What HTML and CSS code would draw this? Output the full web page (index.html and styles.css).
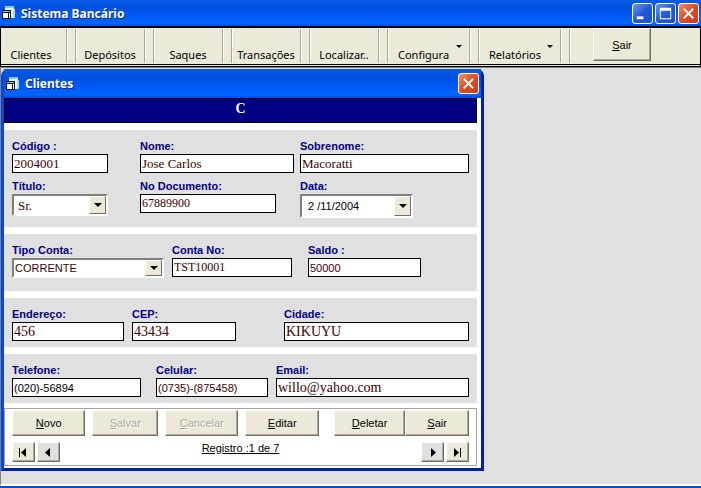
FILE: index.html
```html
<!DOCTYPE html>
<html lang="pt-BR">
<head>
    <meta charset="UTF-8">
    <meta name="viewport" content="width=device-width, initial-scale=1.0">
    <title>Sistema Bancário</title>
    <link rel="stylesheet" href="styles.css">
</head>
<body>
    <!-- Shared icon for the window title bars -->
    <svg class="sprite" aria-hidden="true">
        <symbol id="form-icon" viewBox="0 0 14 14">
            <path fill="#e8f4fc" d="M3 0h9v3h1v9H5V9H3z"/>
            <path fill="#6fd4e4" d="M3 0h9v2H3z"/>
            <path fill="#b4d4ec" d="M11 3h2v9h-2z"/>
            <path fill="#111" d="M0 4h9v9H0z"/>
            <path fill="#5fd0d8" d="M1 5h7v1H1z"/>
            <path fill="#fff" d="M1 7h5v5H1zM7 7h1v5H7z"/>
        </symbol>
    </svg>

    <div class="app">
        <header class="titlebar">
            <svg class="title-icon"><use href="#form-icon"/></svg>
            <h1>Sistema Bancário</h1>
            <div class="window-buttons">
                <button class="win-btn" aria-label="Minimizar">
                    <svg viewBox="0 0 20 20"><path fill="#fff" d="M4 13h7v3H4z"/></svg>
                </button>
                <button class="win-btn" aria-label="Maximizar">
                    <svg viewBox="0 0 20 20"><path fill="#fff" fill-rule="evenodd" d="M4 4h12v12H4zM5 7v8h10V7z"/></svg>
                </button>
                <button class="win-btn close" aria-label="Fechar">
                    <svg viewBox="0 0 20 20"><path stroke="#fff" stroke-width="2" d="M5 5l10 10M15 5L5 15"/></svg>
                </button>
            </div>
        </header>

        <nav class="toolbar">
            <button class="tool first">Clientes</button>
            <button class="tool">Depósitos</button>
            <button class="tool">Saques</button>
            <button class="tool">Transações</button>
            <button class="tool">Localizar..</button>
            <button class="tool wide">Configura <span class="arrow"></span></button>
            <button class="tool wide">Relatórios <span class="arrow"></span></button>
            <span class="separator"></span>
            <button class="button toolbar-exit"><u>S</u>air</button>
        </nav>

        <main class="workspace">
            <section class="child-window">
                <header class="titlebar child-title">
                    <svg class="title-icon"><use href="#form-icon"/></svg>
                    <h2>Clientes</h2>
                    <button class="win-btn close" aria-label="Fechar">
                        <svg viewBox="0 0 20 20"><path stroke="#fff" stroke-width="2" d="M5 5l10 10M15 5L5 15"/></svg>
                    </button>
                </header>

                <form class="client-form">
                    <h3 class="banner">C</h3>

                    <div class="panel personal">
                        <div class="field">
                            <label for="codigo">Código :</label>
                            <input class="small" type="text" id="codigo" value="2004001">
                        </div>
                        <div class="field">
                            <label for="nome">Nome:</label>
                            <input type="text" id="nome" value="Jose Carlos">
                        </div>
                        <div class="field">
                            <label for="sobrenome">Sobrenome:</label>
                            <input type="text" id="sobrenome" value="Macoratti">
                        </div>
                        <div class="field">
                            <label for="titulo">Título:</label>
                            <div class="combo small">
                                <select id="titulo"><option>Sr.</option></select>
                                <span class="drop"></span>
                            </div>
                        </div>
                        <div class="field">
                            <label for="documento">No Documento:</label>
                            <input class="large digits" type="text" id="documento" value="67889900">
                        </div>
                        <div class="field">
                            <label for="data">Data:</label>
                            <div class="combo medium date">
                                <select id="data"><option>2 /11/2004</option></select>
                                <span class="drop"></span>
                            </div>
                        </div>
                    </div>

                    <div class="panel account">
                        <div class="field">
                            <label for="tipo">Tipo Conta:</label>
                            <div class="combo type">
                                <select id="tipo"><option>CORRENTE</option></select>
                                <span class="drop"></span>
                            </div>
                        </div>
                        <div class="field">
                            <label for="conta">Conta No:</label>
                            <input class="number digits" type="text" id="conta" value="TST10001">
                        </div>
                        <div class="field">
                            <label for="saldo">Saldo :</label>
                            <input class="medium sans" type="text" id="saldo" value="50000">
                        </div>
                    </div>

                    <div class="panel address">
                        <div class="field">
                            <label for="endereco">Endereço:</label>
                            <input class="big" type="text" id="endereco" value="456">
                        </div>
                        <div class="field">
                            <label for="cep">CEP:</label>
                            <input class="zip big" type="text" id="cep" value="43434">
                        </div>
                        <div class="field">
                            <label for="cidade">Cidade:</label>
                            <input class="big" type="text" id="cidade" value="KIKUYU">
                        </div>
                    </div>

                    <div class="panel contact">
                        <div class="field">
                            <label for="telefone">Telefone:</label>
                            <input class="phone sans dark" type="text" id="telefone" value="(020)-56894">
                        </div>
                        <div class="field">
                            <label for="celular">Celular:</label>
                            <input class="sans" type="text" id="celular" value="(0735)-(875458)">
                        </div>
                        <div class="field">
                            <label for="email">Email:</label>
                            <input class="big" type="text" id="email" value="willo@yahoo.com">
                        </div>
                    </div>

                    <div class="commands">
                        <div class="actions">
                            <button type="button" class="button"><u>N</u>ovo</button>
                            <button type="button" class="button short" disabled><u>S</u>alvar</button>
                            <button type="button" class="button" disabled><u>C</u>ancelar</button>
                            <button type="button" class="button"><u>E</u>ditar</button>
                            <div class="pair">
                                <button type="button" class="button"><u>D</u>eletar</button>
                                <button type="button" class="button short"><u>S</u>air</button>
                            </div>
                        </div>
                        <div class="record-nav">
                            <button type="button" class="button nav-btn" aria-label="Primeiro">
                                <svg viewBox="0 0 9 9"><path d="M0 0h1v9H0zM7 0v9L2 4.5z"/></svg>
                            </button>
                            <button type="button" class="button nav-btn gray" aria-label="Anterior">
                                <svg viewBox="0 0 9 9"><path d="M6 0v9L1 4.5z"/></svg>
                            </button>
                            <span class="record">Registro :1 de 7</span>
                            <button type="button" class="button nav-btn gray" aria-label="Próximo">
                                <svg viewBox="0 0 9 9"><path d="M3 0v9l5-4.5z"/></svg>
                            </button>
                            <button type="button" class="button nav-btn" aria-label="Último">
                                <svg viewBox="0 0 9 9"><path d="M7 0h1v9H7zM1 0v9l5-4.5z"/></svg>
                            </button>
                        </div>
                    </div>
                </form>
            </section>
        </main>
    </div>
</body>
</html>
```

FILE: styles.css
```css
* {
    margin: 0;
    padding: 0;
    box-sizing: border-box;
}

body {
    font-family: "Liberation Sans", Arial, sans-serif;
    font-size: 11px;
    color: #000;
    background: #e0e0e0;
}

button,
input,
select {
    font: inherit;
    color: inherit;
}

.sprite {
    display: none;
}

.app {
    display: flex;
    flex-direction: column;
    min-height: 100vh;
    border-bottom: 2px solid #0046e0;
}

/* Title bars */
.titlebar {
    display: flex;
    align-items: center;
    gap: 5px;
    height: 26px;
    padding: 0 2px;
    background: linear-gradient(#0a5ae8 0%, #0050e0 30%, #0060fa 75%, #0064ff 90%, #0048d8 100%);
    color: #fff;
}

.titlebar h1,
.titlebar h2 {
    flex: 1;
    font-family: "Noto Sans", sans-serif;
    font-size: 12px;
    font-weight: bold;
    text-shadow: 1px 1px #0a2a80;
}

.title-icon {
    width: 14px;
    height: 14px;
}

.window-buttons {
    display: flex;
    gap: 2px;
}

.win-btn {
    width: 21px;
    height: 21px;
    border: 1px solid #fff;
    border-radius: 3px;
    background: linear-gradient(135deg, #6a98f0, #2458d8 50%, #1c50d0);
}

.win-btn.close {
    background: linear-gradient(135deg, #f09070, #dc4c24 50%, #c83c14);
}

.win-btn svg {
    display: block;
    width: 19px;
    height: 19px;
}

/* Toolbar */
.toolbar {
    display: flex;
    height: 41px;
    border: solid #000;
    border-width: 2px 1px 3px;
    border-bottom-style: double;
    background: #ece9d8;
}

.tool {
    display: flex;
    align-items: flex-end;
    justify-content: center;
    width: 70px;
    height: 34px;
    margin: 1px 8px 0 0;
    padding-bottom: 1px;
    border: none;
    border-left: 1px solid #aca899;
    border-right: 1px solid #aca899;
    background: none;
    box-shadow: inset 1px 0 #fff, 1px 0 #fff;
    font-family: "Noto Sans", sans-serif;
}

.tool.first {
    width: 66px;
    padding-right: 5px;
    border-left: none;
    box-shadow: 1px 0 #fff;
}

.tool.wide {
    justify-content: space-between;
    width: 83px;
    padding-left: 10px;
    padding-right: 7px;
}

.separator {
    width: 2px;
    height: 34px;
    margin-top: 1px;
    border-left: 1px solid #aca899;
    border-right: 1px solid #fff;
}

.arrow {
    margin-bottom: 14px;
    border: 3px solid transparent;
    border-top-color: #000;
    border-bottom: none;
}

.button {
    border: 1px solid;
    border-color: #fff #716f64 #716f64 #fff;
    background: #ece9d8;
    box-shadow: inset -1px -1px #aca899;
}

.button:disabled {
    color: #aca899;
    text-shadow: 1px 1px #fff;
}

.toolbar-exit {
    width: 58px;
    height: 33px;
    margin-left: 22px;
}

/* Workspace and child window */
.workspace {
    flex: 1;
    padding: 1px 0 13px;
    border-top: 1px solid #808080;
    border-left: 1px solid #808080;
    border-bottom: 2px solid #fff;
    background: #e0e0e0;
}

.child-window {
    width: calc(100% - 217px);
    min-width: 460px;
    border: solid #0848d8;
    border-width: 0 3px 3px;
    border-right-color: #0020a8;
    border-bottom-color: #0020a8;
    border-radius: 7px 7px 0 0;
    background: #0848d8;
}

.child-title {
    height: 29px;
    padding: 0 2px;
}

.client-form {
    padding: 0 4px 2px 0;
    background: #fff;
}

.banner {
    height: 25px;
    border: 1px solid #000;
    background: #000080;
    color: #fff;
    font-family: "Liberation Serif", serif;
    font-size: 14px;
    line-height: 20px;
    text-align: center;
}

.panel {
    display: grid;
    gap: 5px 8px;
    margin-top: 7px;
    padding: 8px 8px 6px;
    background: #e0e0e0;
}

.personal {
    grid-template-columns: 122fr 154fr 169fr;
    column-gap: 6px;
    padding-bottom: 9px;
}

.account {
    grid-template-columns: 152fr 128fr 161fr;
    padding-bottom: 13px;
}

.address {
    grid-template-columns: 112fr 144fr 185fr;
}

.contact {
    grid-template-columns: 136fr 112fr 193fr;
}

.field label {
    display: block;
    color: #000080;
    font-weight: bold;
    line-height: 16px;
}

.field input {
    display: block;
    width: 100%;
    height: 19px;
    padding: 0 1px;
    border: 1px solid #000;
    background: #fff;
    color: #400000;
    font-family: "Liberation Serif", serif;
    font-size: 13px;
}

.field input.digits {
    font-size: 12px;
}

.field input.big {
    font-size: 14px;
}

.field input.sans {
    font-family: "Liberation Sans", Arial, sans-serif;
    font-size: 11px;
}

.field input.dark {
    color: #000;
}

.field .small {
    width: 96px;
}

.field .medium {
    width: 113px;
}

.field .large {
    width: 136px;
}

.field .number {
    width: 120px;
}

.field .zip {
    width: 104px;
}

.field .phone {
    width: 129px;
}

/* Drop-downs */
.combo {
    display: flex;
    height: 22px;
    border: 2px solid;
    border-color: #808080 #fff #fff #808080;
    background: #fff;
}

.combo select {
    flex: 1;
    min-width: 0;
    padding-left: 4px;
    border: none;
    background: none;
    appearance: none;
    color: #400000;
    font-family: "Liberation Serif", serif;
    font-size: 13px;
}

.combo.type {
    height: 20px;
}

.combo.type select {
    padding-left: 1px;
    font-family: "Liberation Sans", Arial, sans-serif;
    font-size: 11px;
}

.combo.date {
    height: 24px;
}

.combo.date select {
    padding-left: 6px;
    color: #000;
    font-family: "Liberation Sans", Arial, sans-serif;
    font-size: 11px;
}

.drop {
    display: flex;
    align-items: center;
    justify-content: center;
    width: 17px;
    border: 1px solid;
    border-color: #fff #716f64 #716f64 #fff;
    background: #ece9d8;
    pointer-events: none;
}

.drop::after {
    content: "";
    border: 4px solid transparent;
    border-top-color: #000;
    border-bottom: none;
}

/* Command bar */
.commands {
    display: flex;
    flex-direction: column;
    gap: 6px;
    margin-top: 5px;
    padding: 1px 7px 3px;
    border: 1px solid #aca0a0;
}

.actions {
    display: flex;
    gap: 7px;
}

.actions .button {
    flex: 73 1 0;
    height: 26px;
}

.actions .short {
    flex-grow: 65;
}

.pair {
    display: flex;
    flex: 138 1 0;
    margin-left: 8px;
}

.record-nav {
    display: flex;
    gap: 2px;
}

.nav-btn {
    display: flex;
    align-items: center;
    justify-content: center;
    width: 23px;
    height: 20px;
}

.nav-btn.gray {
    background: #e0e0e0;
}

.nav-btn svg {
    width: 9px;
    height: 9px;
}

.record {
    flex: 1;
    text-align: center;
    text-decoration: underline;
}
```
